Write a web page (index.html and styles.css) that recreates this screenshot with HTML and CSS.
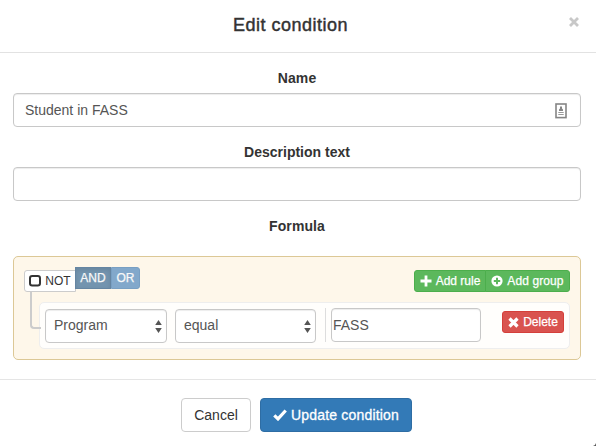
FILE: index.html
```html
<!DOCTYPE html>
<html lang="en">
<head>
<meta charset="utf-8">
<title>Edit condition</title>
<link rel="stylesheet" href="styles.css">
</head>
<body>
<div class="modal">
  <header class="modal-header">
    <h4 class="title">Edit condition</h4>
    <button class="close" aria-label="Close"><svg width="12" height="12" viewBox="0 0 12 12"><path d="M2 2l8 8M10 2l-8 8" stroke="#c8c8c8" stroke-width="2.800"/></svg></button>
  </header>
  <main class="modal-body">
    <div class="label name-label">Name</div>
    <div class="field"><span>Student in FASS</span>
      <svg class="card" width="12" height="16" viewBox="0 0 12 16"><rect x="1" y="1" width="10" height="13.6" fill="#fff" stroke="#858585" stroke-width="1.6"/><path d="M5 3.4h2v2.2l1 .8V8H4V6.400l1-.8z" fill="#858585"/><path d="M3.300 9.500h5.400M3.300 11.500h5.400" stroke="#999" stroke-width="1.200"/></svg>
    </div>
    <div class="label">Description text</div>
    <div class="field"></div>
    <div class="label name-label">Formula</div>
    <section class="group">
      <div class="group-header">
        <div class="conditions">
          <button class="btn-xs not"><svg width="12" height="12" viewBox="0 0 12 12"><rect x="1" y="1" width="10" height="9.500" rx="2.200" fill="none" stroke="#333" stroke-width="2"/></svg><span>NOT</span></button>
          <button class="btn-xs and"><span>AND</span></button>
          <button class="btn-xs or"><span>OR</span></button>
        </div>
        <div class="actions">
          <button class="btn-xs add-rule"><svg width="12" height="12" viewBox="0 0 12 12"><path d="M6 .5v11M.5 6h11" stroke="#fff" stroke-width="2.800"/></svg><span>Add rule</span></button>
          <button class="btn-xs add-group"><svg width="12" height="12" viewBox="0 0 12 12"><circle cx="6" cy="6" r="5.600" fill="#fff"/><path d="M6 2.800v6.400M2.800 6h6.400" stroke="#5cb85c" stroke-width="2"/></svg><span>Add group</span></button>
        </div>
      </div>
      <div class="rule">
        <div class="select select-program"><span>Program</span><svg width="7" height="13" viewBox="0 0 7 13"><path d="M3.500 0L6.800 5H.2zM3.500 13L.2 8h6.600z" fill="#555"/></svg></div>
        <div class="select select-op"><span>equal</span><svg width="7" height="13" viewBox="0 0 7 13"><path d="M3.500 0L6.800 5H.2zM3.500 13L.2 8h6.600z" fill="#555"/></svg></div>
        <div class="value"><div class="value-input"><span>FASS</span></div></div>
        <button class="btn-xs delete"><svg width="11" height="11" viewBox="0 0 11 11"><path d="M1.500 1.500l8 8M9.500 1.500l-8 8" stroke="#fff" stroke-width="3.200"/></svg><span>Delete</span></button>
      </div>
    </section>
  </main>
  <footer class="modal-footer">
    <button class="btn cancel"><span>Cancel</span></button>
    <button class="btn update"><svg width="14" height="12" viewBox="0 0 14 12"><path d="M1.300 6.300l3.700 3.600L12.700 1.500" fill="none" stroke="#fff" stroke-width="3.200"/></svg><span>Update condition</span></button>
  </footer>
  <i class="corner"></i>
</div>
</body>
</html>
```

FILE: styles.css
```css
* { box-sizing: border-box; }
body { margin: 0; background: #fff; color: #333; font: 14px/20px "Liberation Sans", Arial, sans-serif; overflow: hidden; }
button { font: inherit; margin: 0; padding: 0; border: 0; background: none; color: inherit; }
svg { display: block; flex: none; }
span { white-space: nowrap; }
.modal { position: relative; width: 596px; height: 446px; }
.modal-header { position: relative; height: 53px; padding: 12px 15px 0 13px; border-bottom: 1px solid #e2e2e2; }
.title { margin: 0; padding-right: 13px; font-size: 18px; line-height: 26px; font-weight: 400; letter-spacing: .5px; text-align: center; -webkit-text-stroke: .45px #333; }
.close { position: absolute; top: 16px; right: 16px; }
.modal-body { padding: 15px 15px 0 13px; height: 326px; }
.label { height: 20px; margin-bottom: 5px; text-align: center; font-weight: 700; }
.name-label { letter-spacing: .1px; }
.field { display: flex; align-items: center; justify-content: space-between; height: 34px; margin-bottom: 15px; padding: 0 13px 0 11px; border: 1px solid #c8c8c8; border-radius: 4px; box-shadow: inset 0 1px 1px rgba(0,0,0,.075); color: #555; }
.card { margin-top: 1px; }
.group { height: 104px; margin-top: 20px; padding: 10px; border: 1px solid #dcc896; border-radius: 5px; background: #fef7ea; }
.group-header { display: flex; justify-content: space-between; height: 25px; }
.conditions { display: flex; }
.actions { display: flex; padding-top: 3px; }
.btn-xs { display: flex; align-items: center; justify-content: center; gap: 4px; height: 22px; border: 1px solid; font-size: 12px; line-height: 18px; border-radius: 3px; }
.not { width: 52px; margin-top: 3px; background: #fff; border-color: #ccc; border-radius: 3px 0 0 3px; }
.and { width: 36px; margin-left: -1px; background: #7394af; border-color: #6585a2; border-radius: 0; box-shadow: inset 0 2px 4px rgba(0,0,0,.1); }
.or { width: 29px; background: #82a8cb; border-color: #789fc3; border-radius: 0 3px 3px 0; }
.and, .or { color: #f8f8f8; -webkit-text-stroke: .25px #f8f8f8; }
.add-rule, .add-group, .delete { color: #fff; -webkit-text-stroke: .25px #fff; }
.add-rule { width: 72px; background: #5cb85c; border-color: #4cae4c; border-radius: 3px 0 0 3px; }
.add-group { width: 85px; margin-left: -1px; background: #5cb85c; border-color: #4cae4c; border-radius: 0 3px 3px 0; letter-spacing: .1px; }
.rule { position: relative; display: flex; align-items: flex-start; height: 47px; margin: 10px 0 0 15px; padding: 5px; border: 1px solid #eee; border-radius: 5px; background: #fffefc; }
/* connector from the group header to the rule */
.rule::before { content: ""; position: absolute; left: -10px; top: -11px; width: 9px; height: 35px; border: solid #ccc; border-width: 0 0 2px 2px; border-radius: 0 0 0 4px; }
.select { display: flex; align-items: center; justify-content: space-between; height: 34px; margin-top: 1px; border: 1px solid #c8c8c8; border-radius: 4px; background: #fff; box-shadow: inset 0 1px 1px rgba(0,0,0,.075); color: #555; }
.select-program { width: 122px; padding: 0 4px 0 8px; }
.select-op { width: 141px; margin-left: 8px; padding: 0 4px 0 8px; }
.select span { margin-top: -2px; }
.value { height: 34px; margin-left: 9px; padding-left: 5px; border-left: 1px solid #ddd; }
.value-input { display: flex; align-items: center; width: 150px; height: 34px; padding-left: 1px; border: 1px solid #c8c8c8; border-radius: 4px; background: #fff; box-shadow: inset 0 1px 1px rgba(0,0,0,.075); color: #555; }
.delete { width: 62px; margin: 3px 0 0 auto; background: #d9534f; border-color: #d43f3a; }
.modal-footer { display: flex; justify-content: center; gap: 9px; height: 67px; padding: 18px 3px 0 0; border-top: 1px solid #e5e5e5; }
.btn { display: flex; align-items: center; justify-content: center; gap: 4px; height: 34px; border: 1px solid #ccc; border-radius: 4px; }
.cancel { width: 70px; }
.update { width: 152px; background: #337ab7; border-color: #2e6da4; color: #fff; letter-spacing: .18px; -webkit-text-stroke: .3px #fff; }
.corner { position: absolute; right: 0; bottom: 0; border: solid transparent; border-width: 2px 0 0 2px; border-bottom: 1px solid #555; border-right: 1px solid #555; }
```
